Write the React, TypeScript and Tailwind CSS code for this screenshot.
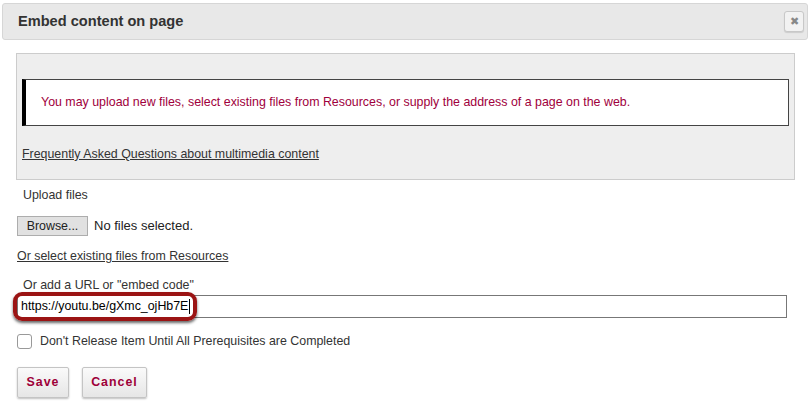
export default function App() {
  return (
    <div className="w-[812px] h-[418px] overflow-hidden bg-white font-['Liberation_Sans',Arial,sans-serif] text-[12.4px] text-[#333]">
      {/* HEADER */}
      <div className="ml-[2px] mt-[3px] w-[806px] h-[37px] flex items-center justify-between pl-[15px] pr-[3px] bg-[#e8e8e8] border border-[#d6d6d6] rounded-[3px]">
        <h1 className="text-[14.6px] font-bold text-[#333]">Embed content on page</h1>
        <button className="w-[20px] h-[21px] flex items-center justify-center bg-[#f2f2f2] border border-[#c8c8c8] rounded-[3px] shadow-[0_1px_1px_rgba(0,0,0,0.12)] text-[#888] text-[11px] leading-none">
          ✖
        </button>
      </div>

      {/* INFO BOX */}
      <div className="ml-[16px] mt-[13px] w-[779px] h-[127px] bg-[#eeeeee] border border-[#cccccc] pt-[25px] pl-[5px] pr-[5px]">
        <div className="h-[47px] flex items-center bg-white border border-[#444] border-l-[4px] border-l-black pl-[15px] text-[#a0003c]">
          You may upload new files, select existing files from Resources, or supply the address of a page on the web.
        </div>
        <a href="#" className="block mt-[20px] underline text-[#333] leading-[16px]">
          Frequently Asked Questions about multimedia content
        </a>
      </div>

      {/* FORM */}
      <div className="pl-[17px]">
        <div className="mt-[7px] pl-[6px] leading-[16px]">Upload files</div>

        <div className="mt-[13px] flex items-center gap-[6px]">
          <button className="h-[20px] w-[71px] bg-[#e1e1e1] border border-[#adadad] text-[12.4px] text-[#222]">
            Browse...
          </button>
          <span className="text-[13px] text-[#222]">No files selected.</span>
        </div>

        <a href="#" className="block mt-[12px] underline text-[#333] leading-[16px]">
          Or select existing files from Resources
        </a>

        <div className="mt-[13px] pl-[6px] leading-[16px]">Or add a URL or "embed code"</div>

        <div className="relative mt-[2px] w-[770px]">
          <div className="h-[23px] w-[770px] border border-[#777] bg-white flex items-center pl-[3px] text-black">
            https://youtu.be/gXmc_ojHb7E
            <span className="ml-[1px] w-px h-[15px] bg-black" />
          </div>
          {/* annotation highlight */}
          <div className="absolute left-[-4px] top-[-3px] w-[184px] h-[29px] rounded-[9px] border-[4px] border-[#9b1414] shadow-[0_2px_3px_rgba(0,0,0,0.6)]" />
        </div>

        <label className="mt-[15px] flex items-center gap-[8px] leading-[16px]">
          <span className="w-[15px] h-[15px] rounded-[3px] border border-[#999] bg-white" />
          <span>Don't Release Item Until All Prerequisites are Completed</span>
        </label>

        <div className="mt-[18px] flex gap-[13px]">
          <button className="h-[31px] w-[52px] rounded-[2px] border border-[#c4c4c4] bg-gradient-to-b from-[#fafafa] to-[#e6e6e6] shadow-[0_1px_2px_rgba(0,0,0,0.25)] text-[#9e0038] font-bold text-[12.4px] tracking-[1px]">
            Save
          </button>
          <button className="h-[31px] w-[65px] rounded-[2px] border border-[#c4c4c4] bg-gradient-to-b from-[#fafafa] to-[#e6e6e6] shadow-[0_1px_2px_rgba(0,0,0,0.25)] text-[#9e0038] font-bold text-[12.4px] tracking-[1px]">
            Cancel
          </button>
        </div>
      </div>
    </div>
  );
}
